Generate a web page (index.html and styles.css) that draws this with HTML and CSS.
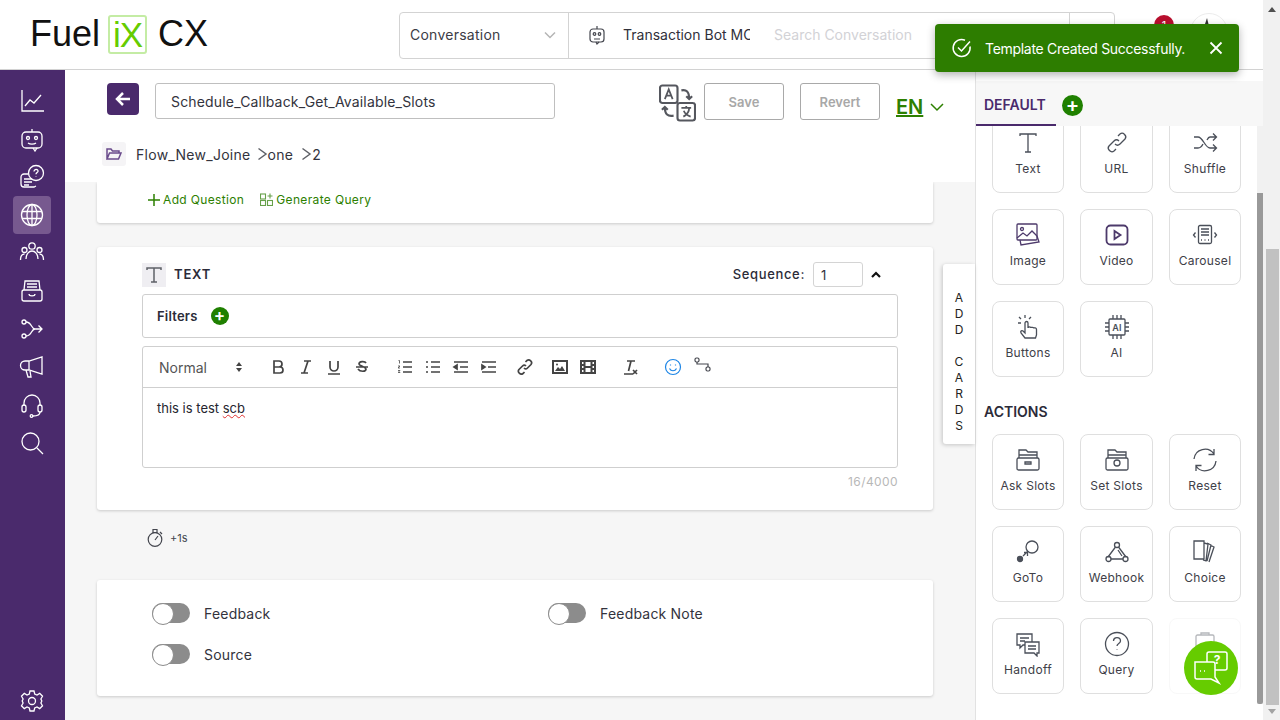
FILE: index.html
```html
<!DOCTYPE html>
<html>
<head>
   <meta charset="utf-8">
   <title>Fuel iX CX</title>
   <link rel="stylesheet" href="styles.css">
</head>
<body>

   <div class="page">

   <!-- top bar -->
   <header class="topbar">
      <div class="logo">
         <span>Fuel</span><span class="logo-box">iX</span><span>CX</span>
      </div>
      <div class="search">
         <div class="search-type">
            <span>Conversation</span>
            <svg width="14" height="14" viewBox="0 0 14 14" class="ln-grey"><path d="M2 4.500l5 5 5-5"/></svg>
         </div>
         <div class="search-main">
            <svg width="20" height="22" viewBox="0 0 20 22" class="ln-dark"><rect x="3" y="5" width="14" height="13" rx="3"/><path d="M10 5V2M7 15h6M9 18l1 2 2-2"/><circle cx="7.500" cy="10" r="1.300"/><circle cx="12.500" cy="10" r="1.300"/></svg>
            <span class="search-bot">Transaction Bot MC</span>
            <span class="search-hint">Search Conversation</span>
         </div>
         <div class="search-end"></div>
      </div>
      <div class="top-right">
         <div class="bell">
            <svg width="12" height="20" viewBox="0 0 12 20"><path d="M2 20V12c0-3 3-5 10-6v14z" fill="#4a2a6c"/></svg>
            <span class="bell-badge">1</span>
         </div>
         <div class="avatar">
            <svg width="28" height="14" viewBox="0 0 28 14"><path d="M8 13L12 1l3 12z" fill="#333"/><path d="M20 13l7-5v5z" fill="#999"/></svg>
         </div>
      </div>
   </header>

   <div class="toast">
      <svg width="22" height="22" viewBox="0 0 22 22" class="ln-white"><path d="M19 9.500A8.500 8.500 0 1 1 14 3.200"/><path d="M7 10.500l3.500 3.500L19 4.500"/></svg>
      <span class="toast-msg">Template Created Successfully.</span>
      <svg width="14" height="14" viewBox="0 0 14 14" class="ln-white toast-x"><path d="M1.500 1.500l11 11M12.500 1.500l-11 11"/></svg>
   </div>

   <div class="body-row">

      <!-- left nav -->
      <nav class="sidebar">
         <div class="nav-list">
            <a class="nav-item"><svg width="26" height="26" viewBox="0 0 26 26"><path d="M3 2v21h22M6 18l5-6 4 3 7-8"/></svg></a>
            <a class="nav-item"><svg width="26" height="26" viewBox="0 0 26 26"><rect x="3" y="6" width="20" height="16" rx="4"/><path d="M13 6V3M9 17c2 1.500 6 1.500 8 0M14 22l2 3 2-3"/><circle cx="9" cy="12" r="1.500"/><circle cx="17" cy="12" r="1.500"/></svg></a>
            <a class="nav-item"><svg width="26" height="26" viewBox="0 0 26 26"><circle cx="17" cy="9" r="7.500"/><path d="M15 7.500c0-3 4.500-2.500 4-.2-.3 1.300-2 1.500-2 3M17 12.500v.5M9.500 10H5a3 3 0 0 0-3 3v7a3 3 0 0 0 3 3h10l2-1M5 15h8M5 18h8M5 21h5"/></svg></a>
            <a class="nav-item active"><svg width="24" height="24" viewBox="0 0 24 24"><circle cx="12" cy="12" r="10.500"/><ellipse cx="12" cy="12" rx="5" ry="10.500"/><path d="M12 1.500v21M2 8.500h20M2 15.500h20"/></svg></a>
            <a class="nav-item"><svg width="26" height="26" viewBox="0 0 26 26"><circle cx="13" cy="6" r="3.200"/><circle cx="5.500" cy="10" r="2.500"/><circle cx="20.500" cy="10" r="2.500"/><path d="M7 19c0-5 3-8 6-8s6 3 6 8M1.500 20c0-3.500 1.500-6 4-6M24.500 20c0-3.500-1.500-6-4-6"/></svg></a>
            <a class="nav-item"><svg width="26" height="26" viewBox="0 0 26 26"><rect x="3" y="12" width="20" height="11" rx="2"/><path d="M5 12l1-9h14l1 9M8 6h10M8 9h10M10 16c0 2.500 6 2.500 6 0"/></svg></a>
            <a class="nav-item"><svg width="26" height="26" viewBox="0 0 26 26"><circle cx="5" cy="6" r="2"/><circle cx="5" cy="20" r="2"/><path d="M7 6c6 0 5 7 9 7M7 20c6 0 5-7 9-7h7M19.500 9.500L23 13l-3.500 3.500"/></svg></a>
            <a class="nav-item"><svg width="26" height="26" viewBox="0 0 26 26"><path d="M23 3v17L10 16H6a4 4 0 0 1 0-9h4zM10 7v9M7 16l2 7h3l-1-6"/></svg></a>
            <a class="nav-item"><svg width="26" height="26" viewBox="0 0 26 26"><path d="M5 14v-3a8 8 0 0 1 16 0v3"/><rect x="3" y="13" width="4" height="7" rx="2"/><rect x="19" y="13" width="4" height="7" rx="2"/><path d="M21 20c0 3-3 4-7 4"/><circle cx="12.500" cy="24" r="1.300"/></svg></a>
            <a class="nav-item"><svg width="26" height="26" viewBox="0 0 26 26"><circle cx="11.500" cy="11.500" r="8.500"/><path d="M18 18l6 6"/></svg></a>
         </div>
         <a class="nav-item"><svg width="24" height="24" viewBox="0 0 24 24"><circle cx="12" cy="12" r="3.500"/><path d="M10 2h4l.7 3 2.300 1 2.700-1.600 2.800 2.800L20.900 10l.9 2-.9 2 1.600 2.800-2.800 2.800L17 18l-2.300 1-.7 3h-4l-.7-3L7 18l-2.700 1.600-2.800-2.800L3.100 14l-.9-2 .9-2-1.600-2.800 2.800-2.800L7 6l2.300-1z"/></svg></a>
      </nav>

      <main class="main">
         <div class="subhead">
            <div class="title-row">
               <button class="back-btn">
                  <svg width="18" height="18" viewBox="0 0 18 18" class="ln-white thick"><path d="M16 9H3M9 3L3 9l6 6"/></svg>
               </button>
               <input class="title-input" type="text" value="Schedule_Callback_Get_Available_Slots">
               <div class="title-actions">
                  <svg class="translate-ico" width="37" height="38" viewBox="0 0 38 38"><rect x="1" y="1" width="18" height="18" rx="2.500"/><rect x="19" y="19" width="18" height="18" rx="2.500"/><path class="thin" d="M6 15l4-10 4 10M7.500 11.500h5M23 24h10M28 22v2M25 33c4-2 6-5 6-9M25.500 27c1 3 4 5 7 6"/><path d="M23 6c5-1 8 1 8 9M28 12l3 3 3-3M15 32c-6 1-9-1-9-9M3 26l3-3 3 3"/></svg>
                  <button class="ghost-btn">Save</button>
                  <button class="ghost-btn">Revert</button>
                  <div class="lang">
                     <a>EN</a>
                     <svg width="14" height="14" viewBox="0 0 14 14" class="ln-green"><path d="M1 4l6 6 6-6"/></svg>
                  </div>
               </div>
            </div>
            <div class="crumbs">
               <span class="crumb-ico">
                  <svg width="16" height="14" viewBox="0 0 16 14" class="ln-purple"><path d="M1 12V2h4l1.500 2H13v2M1 12l2.500-6H15l-2.500 6z"/></svg>
               </span>
               <span class="crumb-first">Flow_New_Joine</span>
               <svg width="11" height="14" viewBox="0 0 11 14" class="ln-grey-dk"><path d="M1.500 1.500L9 7l-7.500 5.500"/></svg>
               <span>one</span>
               <svg width="11" height="14" viewBox="0 0 11 14" class="ln-grey-dk crumb-gap"><path d="M1.500 1.500L9 7l-7.500 5.500"/></svg>
               <span>2</span>
            </div>
         </div>

         <div class="canvas">
            <section class="card card-query">
               <a class="green-link">
                  <svg width="12" height="12" viewBox="0 0 12 12" class="ln-green"><path d="M6 0v12M0 6h12"/></svg>
                  Add Question
               </a>
               <a class="green-link">
                  <svg width="13" height="13" viewBox="0 0 13 13" class="ln-green-lt"><rect x=".5" y="1" width="5" height="5"/><rect x=".5" y="7.500" width="5" height="5"/><rect x="7.500" y="7.500" width="5" height="5"/><path d="M10 .5v5M7.500 3h5"/></svg>
                  Generate Query
               </a>
            </section>

            <section class="card card-text">
               <div class="text-head">
                  <span class="type-ico">
                     <svg width="18" height="18" viewBox="0 0 18 18" class="ln-grey-dk"><path d="M2 4V2h14v2M9 2v14M6 16h6"/></svg>
                  </span>
                  <span class="type-name">TEXT</span>
                  <span class="seq-label">Sequence:</span>
                  <input class="seq-input" type="text" value="1">
                  <svg class="seq-arrow" width="10" height="8" viewBox="0 0 10 8"><path d="M1 6l4-4 4 4"/></svg>
               </div>
               <div class="filters">
                  <b>Filters</b>
                  <span class="plus-dot">+</span>
               </div>
               <div class="editor">
                  <div class="toolbar">
                     <span class="tb-format">Normal
                        <svg width="8" height="12" viewBox="0 0 8 12"><path d="M4 1l3 4H1zM4 11l3-4H1z" fill="#444"/></svg>
                     </span>
                     <div class="tb-group tb-first">
                        <svg width="18" height="18" viewBox="0 0 18 18" class="tb"><path d="M5 3h5a3 3 0 0 1 0 6H5zM5 9h6a3 3 0 0 1 0 6H5z"/></svg>
                        <svg width="18" height="18" viewBox="0 0 18 18" class="tb"><path d="M7 3h7M4 15h7M11 3L7 15"/></svg>
                        <svg width="18" height="18" viewBox="0 0 18 18" class="tb"><path d="M5 3v6a4 4 0 0 0 8 0V3M3 16h12"/></svg>
                        <svg width="18" height="18" viewBox="0 0 18 18" class="tb"><path d="M13 5c-1-2-7-2-7 1 0 2 6 2 7 5 0 3-6 3-8 0M3 9h12"/></svg>
                     </div>
                     <div class="tb-group">
                        <svg width="18" height="18" viewBox="0 0 18 18" class="tb"><path d="M7 4h9M7 9h9M7 14h9"/><path d="M2.500 2.500h1v3M2 8h2l-2 2h2M2 12.500h2l-1 1 1 1H2" class="tb-thin"/></svg>
                        <svg width="18" height="18" viewBox="0 0 18 18" class="tb"><path d="M7 4h9M7 9h9M7 14h9M2 4h2M2 9h2M2 14h2"/></svg>
                        <svg width="18" height="18" viewBox="0 0 18 18" class="tb"><path d="M2 4h14M8 9h8M2 14h14"/><path d="M5 7v4L2 9z" fill="#444"/></svg>
                        <svg width="18" height="18" viewBox="0 0 18 18" class="tb"><path d="M2 4h14M8 9h8M2 14h14"/><path d="M2 7v4l3-2z" fill="#444"/></svg>
                     </div>
                     <svg width="18" height="18" viewBox="0 0 18 18" class="tb tb-link"><path d="M8 10c1 1 2.500 1 3.500 0l3.500-3.500c2-2.500-1.500-6-4-4L9.500 4M10 8C9 7 7.500 7 6.500 8L3 11.500c-2 2.500 1.500 6 4 4L8.500 14"/></svg>
                     <svg width="16" height="14" viewBox="0 0 16 14" class="tb-img"><path d="M1 1h14v12H1z" stroke="#444" stroke-width="2"/><path d="M3 11l3-4 2 2 2-3 3 5z" fill="#444"/><circle cx="5" cy="4.500" r="1" fill="#444"/></svg>
                     <svg width="16" height="14" viewBox="0 0 16 14" class="tb-film"><path d="M1 1h14v12H1zM4.500 1v12M11.500 1v12M1 5h3.500M1 9h3.500M11.500 5H15M11.500 9H15M4.500 7h7" stroke="#444" stroke-width="2"/></svg>
                     <svg width="18" height="18" viewBox="0 0 18 18" class="tb tb-clear"><path d="M6 3h8M10 3L7.500 13M3 16h9M12 12l4 4M16 12l-4 4"/></svg>
                     <svg width="18" height="18" viewBox="0 0 18 18" class="ln-blue tb-smile"><circle cx="9" cy="9" r="7.500"/><path d="M5.500 10.500c1.500 3 5.500 3 7 0M6.500 6.500v1M11.500 6.500v1"/></svg>
                     <svg width="18" height="16" viewBox="0 0 18 16" class="ln-dark tb-route"><rect x="1" y="1" width="4" height="4" rx="1.500"/><rect x="12" y="10" width="4" height="4" rx="1.500"/><path d="M3 5v2h11v3"/></svg>
                  </div>
                  <div class="editor-body">this is test <span class="typo">scb</span></div>
               </div>
               <div class="counter">16/4000</div>
            </section>

            <div class="delay">
               <svg width="18" height="20" viewBox="0 0 18 20" class="ln-dark"><circle cx="9" cy="11.500" r="6.800"/><path d="M7 1.500h4v3H7zM9 12l3-4M14 4l2 2"/></svg>
               <span>+1s</span>
            </div>

            <section class="card card-flags">
               <div class="flag"><span class="toggle"></span>Feedback</div>
               <div class="flag"><span class="toggle"></span>Feedback Note</div>
               <div class="flag"><span class="toggle"></span>Source</div>
            </section>

            <aside class="add-cards">A<br>D<br>D<br><br>C<br>A<br>R<br>D<br>S</aside>
         </div>
      </main>

      <!-- right palette -->
      <aside class="panel">
         <div class="tabs">
            <span class="tab">DEFAULT</span>
            <span class="plus-dot plus-big">+</span>
         </div>
         <div class="palette">
            <div class="palette-scroll">
               <div class="tiles">
                  <div class="tile"><svg width="26" height="26" viewBox="0 0 26 26" class="ln-tile"><path d="M5 6V4h16v2M13 4v18M10 22h6"/></svg>Text</div>
                  <div class="tile"><svg width="26" height="26" viewBox="0 0 26 26" class="ln-tile"><path d="M11 14c1.500 1.500 3.500 1.500 5 0l5-5c2.500-3-2-7.500-5-5l-2 2M15 11c-1.500-1.500-3.500-1.500-5 0l-5 5c-2.500 3 2 7.500 5 5l2-2"/></svg>URL</div>
                  <div class="tile"><svg width="26" height="26" viewBox="0 0 26 26" class="ln-tile"><path d="M2 7h4c5 0 7 11 12 11h6M2 18h4c2.500 0 4-2 5-4M15 10c1-2 2-3 3-3h6M21 3.500L24.500 7 21 10.500M21 14.500l3.500 3.500-3.500 3.500"/></svg>Shuffle</div>
                  <div class="tile"><svg width="26" height="26" viewBox="0 0 26 26" class="ln-tile-purple thin-tile"><rect x="2" y="2" width="20" height="16" rx="1"/><circle cx="7" cy="7" r="1.500"/><path d="M2 16l6-5 4 3 5-5 5 5M5 18l1 5 18-3-2-6"/></svg>Image</div>
                  <div class="tile"><svg width="26" height="26" viewBox="0 0 26 26" class="ln-tile-purple"><rect x="2.500" y="3.500" width="21" height="19" rx="4"/><path d="M10.500 9v8l6-4z"/></svg>Video</div>
                  <div class="tile"><svg width="26" height="26" viewBox="0 0 26 26" class="ln-tile"><rect x="6.500" y="3.500" width="13" height="18" rx="1.500"/><path d="M9 7h8M9 10h8M9 13h8M9 18h1M12.500 18h1M16 18h1M3.500 10.500L1.500 13l2 2.500M22.500 10.500l2 2.500-2 2.500"/></svg>Carousel</div>
                  <div class="tile"><svg width="26" height="26" viewBox="0 0 26 26" class="ln-tile"><path d="M10 24l-4-5c-1-2 1-3 2-2l2 2V9c0-2 3-2 3 0v5c0-1.500 3-1.500 3 0 0-1 3-1 3 .5 0-1 2.500-1 2.500 1V21l-1 3zM4 3l2 2M10 1v3M16 3l-2 2M3 9h3"/></svg>Buttons</div>
                  <div class="tile"><svg width="26" height="26" viewBox="0 0 26 26" class="ln-tile"><rect x="5" y="5" width="16" height="16" rx="1"/><path d="M9 5V1M13 5V1M17 5V1M9 25v-4M13 25v-4M17 25v-4M5 9H1M5 13H1M5 17H1M25 9h-4M25 13h-4M25 17h-4"/><text x="13" y="17" text-anchor="middle" class="ai-label">AI</text></svg>AI</div>
               </div>
               <h3 class="actions-title">ACTIONS</h3>
               <div class="tiles">
                  <div class="tile"><svg width="26" height="26" viewBox="0 0 26 26" class="ln-tile"><rect x="2" y="11" width="22" height="12" rx="1.500"/><path d="M4 11V3h7l2 2h9v6M4 8h18M10 15h6v2h-6z"/></svg>Ask Slots</div>
                  <div class="tile"><svg width="26" height="26" viewBox="0 0 26 26" class="ln-tile"><rect x="2" y="11" width="22" height="12" rx="1.500"/><path d="M4 11V3h7l2 2h9v6M4 8h18"/><circle cx="13" cy="16" r="3"/></svg>Set Slots</div>
                  <div class="tile"><svg width="26" height="26" viewBox="0 0 26 26" class="ln-tile"><path d="M2 12a11 11 0 0 1 20-5M24 14a11 11 0 0 1-20 5M22 2v5.500h-5.500M4 24v-5.500h5.500"/></svg>Reset</div>
                  <div class="tile"><svg width="26" height="26" viewBox="0 0 26 26" class="ln-tile"><circle cx="17" cy="8" r="6"/><circle cx="5" cy="20" r="2.500" fill="#4a4f59"/><path d="M8 17l5-5M9 13.500h3.500V17"/></svg>GoTo</div>
                  <div class="tile"><svg width="26" height="26" viewBox="0 0 26 26" class="ln-tile"><circle cx="13" cy="6" r="2.500"/><circle cx="4.500" cy="20" r="2.500"/><circle cx="21.500" cy="20" r="2.500"/><path d="M11.500 8L4 18M14.500 8L22 18M7 20h12M14 11l4 6"/></svg>Webhook</div>
                  <div class="tile"><svg width="26" height="26" viewBox="0 0 26 26" class="ln-tile"><path d="M2 2h10v18H2zM12 4l4 1-2 17-3-1M15 4l4 2-4 16M18 6l4 2-5 15"/></svg>Choice</div>
                  <div class="tile"><svg width="26" height="26" viewBox="0 0 26 26" class="ln-tile"><path d="M2 3h15v11H8l-3 3v-3H2zM5 7h9M5 10h5"/><path d="M10 14v-3h14v11h-2v3l-3-3h-9zM13 15h8M13 18h8" fill="#fff"/></svg>Handoff</div>
                  <div class="tile"><svg width="26" height="26" viewBox="0 0 26 26" class="ln-tile"><circle cx="13" cy="13" r="11.500"/><path d="M9.500 10c0-4.500 7-4.500 7 0 0 2.500-3.500 2.500-3.500 5M13 18.500v.5"/></svg>Query</div>
                  <div class="tile tile-faded"><svg width="26" height="26" viewBox="0 0 26 26" class="ln-tile"><rect x="4" y="4" width="18" height="20" rx="1.500"/><path d="M9 4V2h8v2"/></svg></div>
               </div>
            </div>
            <div class="inner-scroll"><div class="inner-thumb"></div></div>
         </div>
      </aside>
   </div>

   </div>

   <!-- page scrollbar -->
   <div class="page-scroll">
      <svg width="8" height="5" viewBox="0 0 8 5" class="sb-arrow"><path d="M4 0l4 5H0z" fill="#505050"/></svg>
      <div class="page-thumb"></div>
      <svg width="8" height="5" viewBox="0 0 8 5" class="sb-arrow"><path d="M4 5l4-5H0z" fill="#a3a3a3"/></svg>
   </div>

   <button class="help-fab">
      <svg width="36" height="34" viewBox="0 0 36 34" class="ln-white"><path d="M14 11V3a2 2 0 0 1 2-2h16a2 2 0 0 1 2 2v14a2 2 0 0 1-2 2h-10"/><path d="M2 11h18a2 2 0 0 1 2 2v13l4 6-8-4H4a2 2 0 0 1-2-2z"/><text x="24" y="13" text-anchor="middle" class="fab-q">?</text><path d="M7 20h1M11 20h1"/></svg>
   </button>

</body>
</html>
```

FILE: styles.css
```css
* {
   box-sizing: border-box;
}
html, body {
   margin: 0;
   height: 100%;
   overflow: hidden;
}
body {
   font-family: Inter, "Liberation Sans", sans-serif;
   color: #2b2b38;
   background: #fff;
   font-size: 13px;
   display: flex;
}
svg {
   fill: none;
   stroke-width: 1.5;
   flex: none;
}
.page {
   width: 1263px;
   flex: none;
   display: flex;
   flex-direction: column;
}

/* stroke colours */
.ln-white { stroke: #fff; }
.thick { stroke-width: 2.5; }
.ln-grey { stroke: #b5b5b5; }
.ln-grey-dk { stroke: #5f6168; }
.ln-dark { stroke: #44464e; stroke-width: 1.2; }
.ln-green { stroke: #2d8000; }
.ln-green-lt { stroke: #66a04a; stroke-width: 1.1; }
.ln-purple { stroke: #6a4b8c; }
.ln-blue { stroke: #1e86e6; stroke-width: 1.2; }
.ln-tile { stroke: #4a4f59; stroke-width: 1.3; }
.ln-tile-purple { stroke: #4d3a6b; stroke-width: 1.8; }
.thin-tile { stroke-width: 1.3; }

/* header */
.topbar {
   height: 70px;
   flex: none;
   display: flex;
   align-items: flex-start;
   border-bottom: 1px solid #d2d2d2;
   padding-left: 30px;
}
.logo {
   display: flex;
   align-items: center;
   gap: 8px;
   width: 369px;
   height: 40px;
   margin-top: 14px;
   font-family: "Liberation Sans", sans-serif;
   font-size: 36px;
   color: #111;
}
.logo-box {
   width: 39px;
   height: 39px;
   border: 2px solid #c4eca4;
   border-radius: 3px;
   color: #66cc00;
   line-height: 35px;
   text-align: center;
   font-size: 35px;
   letter-spacing: -1px;
   margin-right: 3px;
}
.search {
   width: 716px;
   height: 47px;
   margin-top: 12px;
   border: 1px solid #d3d3d3;
   border-radius: 4px;
   display: flex;
}
.search-type {
   width: 169px;
   display: flex;
   align-items: center;
   justify-content: space-between;
   padding: 0 11px 2px 10px;
   border-right: 1px solid #d3d3d3;
   font-size: 14px;
   letter-spacing: .25px;
   color: #3c3c46;
}
.search-main {
   flex: 1;
   display: flex;
   align-items: center;
   padding: 0 0 2px 18px;
   font-size: 14px;
}
.search-bot {
   width: 127px;
   margin-left: 16px;
   overflow: hidden;
   white-space: nowrap;
   color: #30303a;
}
.search-hint {
   margin-left: 24px;
   color: #d2d2d6;
}
.search-end {
   width: 45px;
   border-left: 1px solid #d3d3d3;
}
.top-right {
   margin-left: 30px;
   display: flex;
   gap: 25px;
   padding-top: 13px;
}
.bell {
   width: 20px;
   height: 28px;
   position: relative;
   padding: 4px 0 0 7px;
}
.bell-badge {
   position: absolute;
   left: 9px;
   top: 2px;
   width: 20px;
   height: 20px;
   border-radius: 50%;
   background: #b80f2e;
   color: #fff;
   font-size: 11px;
   text-align: center;
   line-height: 20px;
}
.avatar {
   width: 38px;
   height: 38px;
   border-radius: 50%;
   border: 1px solid #ececec;
   padding: 3px 0 0 4px;
}

/* toast */
.toast {
   position: absolute;
   left: 935px;
   top: 24px;
   width: 304px;
   height: 48px;
   border-radius: 4px;
   background: #2d7d00;
   color: #fff;
   display: flex;
   align-items: center;
   padding: 0 16px;
   box-shadow: 0 3px 8px rgba(0,0,0,.3);
   z-index: 5;
   font-size: 14px;
}
.toast-msg {
   margin-left: 12px;
   flex: 1;
   letter-spacing: -.3px;
}
.toast-x {
   stroke-width: 1.8;
}

.body-row {
   flex: 1;
   display: flex;
   min-height: 0;
}

/* sidebar */
.sidebar {
   width: 65px;
   flex: none;
   background: #4a2a6c;
   display: flex;
   flex-direction: column;
   justify-content: space-between;
   align-items: center;
   padding: 12px 1px 0 0;
}
.nav-list {
   display: flex;
   flex-direction: column;
}
.nav-item {
   width: 38px;
   height: 38px;
   border-radius: 4px;
   display: flex;
   align-items: center;
   justify-content: center;
}
.nav-item svg {
   stroke: #fff;
   stroke-width: 1.3;
}
.nav-item.active {
   background: #77598f;
}

/* main column */
.main {
   flex: none;
   width: 911px;
   display: flex;
   flex-direction: column;
   min-width: 0;
   border-right: 1px solid #e2e2e2;
}
.subhead {
   height: 112px;
   flex: none;
   padding: 13px 0 0 42px;
   background: #fff;
   position: relative;
   z-index: 1;
}
.title-row {
   display: flex;
   align-items: flex-start;
}
.back-btn {
   width: 32px;
   height: 32px;
   border: none;
   border-radius: 4px;
   background: #4a2a6c;
   padding: 0;
   display: flex;
   align-items: center;
   justify-content: center;
}
.title-input {
   width: 400px;
   height: 36px;
   margin-left: 16px;
   border: 1px solid #bfbfbf;
   border-radius: 3px;
   padding: 0 15px;
   font: 14px Inter, sans-serif;
   letter-spacing: .17px;
   color: #33333d;
   outline: none;
}
.title-actions {
   display: flex;
   align-items: flex-start;
   margin-left: 104px;
}
.translate-ico {
   margin: 1px 8px 0 0;
   stroke: #55575e;
   stroke-width: 2.2;
}
.translate-ico .thin {
   stroke-width: 1.8;
}
.ghost-btn {
   width: 80px;
   height: 37px;
   margin-right: 16px;
   border: 1px solid #a9a9a9;
   border-radius: 3px;
   background: #fff;
   color: #a8a8a8;
   font: 600 13px Inter, sans-serif;
}
.lang {
   display: flex;
   align-items: center;
   gap: 7px;
   margin-top: 12px;
}
.lang a {
   color: #2d8000;
   font-size: 20px;
   font-weight: 600;
   text-decoration: underline;
}
.crumbs {
   display: flex;
   align-items: center;
   font-size: 14px;
   letter-spacing: .28px;
   margin: 20px 0 0 -5px;
   color: #33333d;
}
.crumb-ico {
   width: 24px;
   height: 24px;
   background: #f5f4f6;
   border-radius: 3px;
   display: flex;
   align-items: center;
   justify-content: center;
   margin-right: 10px;
}
.crumb-first {
   margin-right: 6px;
}
.crumb-gap {
   margin-left: 8px;
}

/* cards */
.canvas {
   flex: 1;
   background: #f6f6f6;
   padding: 0 42px 0 32px;
   position: relative;
   min-height: 0;
}
.card {
   background: #fff;
   border-radius: 3px;
   box-shadow: 0 1px 3px rgba(0,0,0,.18);
}
.card-query {
   height: 41px;
   display: flex;
   gap: 16px;
   align-items: flex-start;
   padding: 10px 0 0 51px;
   border-top-left-radius: 0;
   border-top-right-radius: 0;
}
.green-link {
   display: flex;
   align-items: center;
   gap: 3px;
   color: #2d8000;
   font-size: 12px;
   letter-spacing: .35px;
   line-height: 15px;
}
.card-text {
   margin-top: 24px;
   height: 263px;
   padding: 15px 35px 0 45px;
}
.text-head {
   display: flex;
   align-items: center;
   height: 25px;
}
.type-ico {
   width: 24px;
   height: 24px;
   background: #efeef2;
   display: flex;
   align-items: center;
   justify-content: center;
}
.type-name {
   margin-left: 8px;
   flex: 1;
   font-weight: 600;
   font-size: 13px;
   letter-spacing: .8px;
   padding-bottom: 2px;
}
.seq-label {
   font-size: 13px;
   font-weight: 500;
   letter-spacing: .65px;
   padding-bottom: 2px;
}
.seq-input {
   width: 50px;
   height: 25px;
   margin-left: 8px;
   padding: 0 7px;
   border: 1px solid #d4d4d4;
   border-radius: 3px;
   font: 13px Inter, sans-serif;
   color: #33333d;
   outline: none;
}
.seq-arrow {
   margin: 0 17px 0 8px;
   stroke: #111;
   stroke-width: 2.2;
}
.filters {
   display: flex;
   align-items: center;
   gap: 13px;
   height: 44px;
   margin-top: 7px;
   padding-left: 14px;
   border: 1px solid #cfcfcf;
   border-radius: 3px;
   font-size: 13px;
   letter-spacing: .2px;
}
.filters b {
   font-weight: 600;
}
.plus-dot {
   width: 18px;
   height: 18px;
   border-radius: 50%;
   background: #1f8000;
   color: #fff;
   font-size: 17px;
   font-weight: 600;
   line-height: 17px;
   text-align: center;
}
.plus-big {
   width: 21px;
   height: 21px;
   font-size: 20px;
   line-height: 20px;
   margin: 0 0 0 6px;
}
.editor {
   margin-top: 8px;
   height: 122px;
   border: 1px solid #cfcfcf;
   border-radius: 3px;
}
.toolbar {
   height: 41px;
   border-bottom: 1px solid #cfcfcf;
   display: flex;
   align-items: center;
   padding-left: 16px;
   color: #444;
}
.tb {
   stroke: #444;
   stroke-width: 1.7;
}
.tb-thin {
   stroke-width: .8;
}
.tb-format {
   width: 100px;
   display: flex;
   justify-content: space-between;
   align-items: center;
   font-size: 14px;
   padding-right: 16px;
   color: #555;
   margin-right: 10px;
}
.tb-group {
   display: flex;
   gap: 10px;
   margin-right: 18px;
}
.tb-first {
   margin-right: 25px;
}
.tb-img { margin-left: 18px; }
.tb-film { margin-left: 12px; }
.tb-clear { margin-left: 25px; }
.tb-smile { margin-left: 25px; }
.tb-route { margin: -4px 0 0 12px; }
.editor-body {
   padding: 12px 14px;
   font-size: 13px;
   line-height: 16px;
   color: #25252f;
}
.typo {
   text-decoration: underline wavy #e03030 1.4px;
}
.counter {
   margin-top: 6px;
   text-align: right;
   font-size: 12px;
   letter-spacing: .4px;
   color: #b8b8b8;
}
.delay {
   display: flex;
   align-items: flex-start;
   gap: 6px;
   height: 70px;
   padding: 18px 0 0 49px;
   font-size: 11px;
   line-height: 20px;
   color: #44464e;
}
.card-flags {
   height: 116px;
   padding: 23px 0 0 55px;
   display: grid;
   grid-template-columns: 396px 1fr;
   grid-template-rows: 20px 20px;
   row-gap: 21px;
}
.flag {
   display: flex;
   align-items: center;
   gap: 14px;
   font-size: 14px;
   letter-spacing: .2px;
   color: #33333d;
}
.toggle {
   width: 38px;
   height: 20px;
   border-radius: 10px;
   background: #8c8c8c;
   position: relative;
}
.toggle::after {
   content: "";
   position: absolute;
   left: 0;
   top: 0;
   width: 20px;
   height: 20px;
   border-radius: 50%;
   background: #fff;
   border: 1px solid #8c8c8c;
}
.add-cards {
   position: absolute;
   left: 878px;
   top: 82px;
   width: 32px;
   height: 180px;
   padding-top: 26px;
   background: #fff;
   border-radius: 3px 0 0 3px;
   box-shadow: -1px 1px 4px rgba(0,0,0,.2);
   text-align: center;
   font-size: 12px;
   line-height: 16px;
   color: #222;
}

/* palette */
.panel {
   flex: 1;
   min-width: 0;
   display: flex;
   flex-direction: column;
   min-height: 0;
}
.tabs {
   height: 56px;
   flex: none;
   display: flex;
   align-items: flex-start;
   border-top: 11px solid #fff;
   background: #f7f7f7;
   padding-top: 14px;
}
.tab {
   color: #4a2a6c;
   font-weight: 600;
   font-size: 14px;
   padding-left: 8px;
   width: 80px;
   height: 31px;
   line-height: 20px;
   border-bottom: 2px solid #4a2a6c;
}
.palette {
   flex: 1;
   min-height: 0;
   display: flex;
   overflow: hidden;
}
.palette-scroll {
   width: 281px;
   margin-top: -9px;
   padding-left: 8px;
}
.tiles {
   display: grid;
   grid-template-columns: 72px 73px 72px;
   grid-auto-rows: 76px;
   gap: 16px;
   padding-left: 8px;
}
.tile {
   border: 1px solid #dfdfdf;
   border-radius: 8px;
   display: flex;
   flex-direction: column;
   align-items: center;
   padding-top: 12px;
   gap: 5px;
   font-size: 12px;
   letter-spacing: .3px;
   color: #404048;
   background: #fff;
}
.tile-faded {
   border-color: #efefef;
   opacity: .4;
}
.ai-label {
   font: 600 9px Inter, sans-serif;
   fill: #4a4f59;
   stroke: none;
}
.actions-title {
   margin: 26px 0 13px;
   font-size: 14px;
   font-weight: 600;
   line-height: 18px;
   color: #2b2b38;
}
.inner-scroll {
   width: 6px;
   height: 578px;
   background: #f1f1f1;
   padding-top: 67px;
}
.inner-thumb {
   height: 511px;
   background: #999;
   border-radius: 0 0 2px 2px;
}

/* page scrollbar */
.page-scroll {
   flex: 1;
   background: #f1f1f1;
   display: flex;
   flex-direction: column;
   align-items: center;
   padding: 7px 0 0 1px;
}
.page-thumb {
   width: 13px;
   height: 456px;
   margin: 237px 0 4px;
   background: #c1c1c1;
}

.help-fab {
   position: absolute;
   left: 1184px;
   top: 641px;
   width: 54px;
   height: 54px;
   padding: 0;
   border: none;
   border-radius: 50%;
   background: #66cc00;
   display: flex;
   align-items: center;
   justify-content: center;
   z-index: 3;
}
.fab-q {
   font: 700 12px Inter, sans-serif;
   fill: #fff;
   stroke: none;
}
```
